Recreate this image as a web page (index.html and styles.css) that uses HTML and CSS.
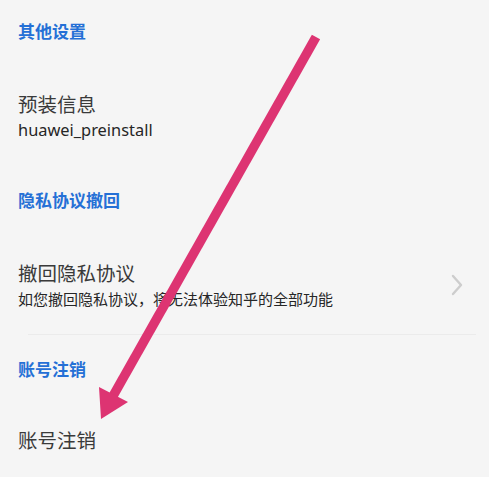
FILE: index.html
```html
<!DOCTYPE html>
<html lang="zh-CN">
<head>
<meta charset="utf-8">
<link rel="stylesheet" href="styles.css">
</head>
<body>
<div class="page">
  <div class="section-title first">其他设置</div>
  <div class="item">
    <div class="texts">
      <div class="item-title">预装信息</div>
      <div class="item-sub latin">huawei_preinstall</div>
    </div>
  </div>
  <div class="section-title">隐私协议撤回</div>
  <div class="item item-gap">
    <div class="texts">
      <div class="item-title">撤回隐私协议</div>
      <div class="item-sub">如您撤回隐私协议，将无法体验知乎的全部功能</div>
    </div>
    <svg class="chevron" width="12" height="22" viewBox="0 0 12 22"><polyline points="2,2 10,11 2,20" fill="none" stroke="#cdcdcd" stroke-width="2.4" stroke-linecap="round" stroke-linejoin="round"/></svg>
  </div>
  <div class="divider"></div>
  <div class="section-title s3">账号注销</div>
  <div class="item item-last">
    <div class="texts">
      <div class="item-title">账号注销</div>
    </div>
  </div>
</div>
<svg class="arrow" width="489" height="477" viewBox="0 0 489 477">
  <line x1="316" y1="37" x2="113" y2="396" stroke="#dd3472" stroke-width="9.5"/>
  <polygon points="99,387 128,402 101,419" fill="#dd3472"/>
</svg>
</body>
</html>
```
FILE: styles.css
```css
html, body {
  margin: 0;
  padding: 0;
  background: #f5f5f5;
}
body {
  width: 489px;
  height: 477px;
  overflow: hidden;
  position: relative;
  font-family: "Noto Sans CJK SC", "Noto Sans", sans-serif;
}
.page {
  padding: 19px 0 0 18px;
}
.section-title {
  font-size: 17px;
  line-height: 24px;
  font-weight: 700;
  color: #2570d6;
  margin-top: 48px;
}
.section-title.first {
  margin-top: 0;
}
.section-title.s3 {
  margin-top: 22px;
}
.item {
  display: flex;
  align-items: center;
  margin-top: 48px;
  padding-right: 26px;
}
.item-last {
  margin-top: 46px;
}
.texts {
  flex: 1;
  display: flex;
  flex-direction: column;
  gap: 3px;
}
.item-title {
  font-size: 19.5px;
  line-height: 26px;
  color: #3a3a3a;
}
.item-sub {
  font-size: 15px;
  line-height: 20px;
  color: #262626;
}
.item-sub.latin {
  font-family: "Noto Sans", "Open Sans", sans-serif;
  font-size: 16.4px;
}
.chevron {
  display: block;
}
.divider {
  height: 1px;
  background: #ebebeb;
  margin: 25px 13px 0 10px;
}
.arrow {
  position: absolute;
  left: 0;
  top: 0;
}
```
